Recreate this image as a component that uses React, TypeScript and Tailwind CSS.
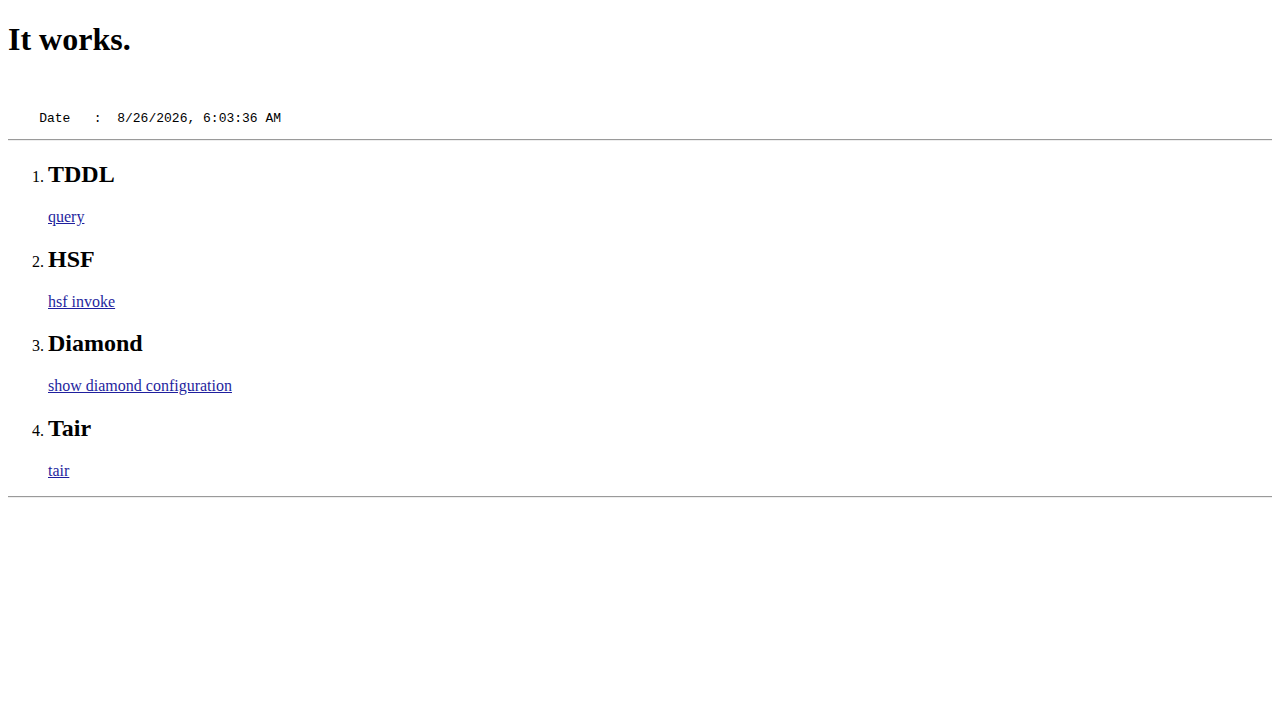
import React from "react";

const items = [
  { title: "TDDL", link: "query" },
  { title: "HSF", link: "hsf invoke" },
  { title: "Diamond", link: "show diamond configuration" },
  { title: "Tair", link: "tair" },
];

export default function App() {
  return (
    <div className="bg-white min-h-[720px] px-2 pt-[21.44px] font-['Liberation_Serif',serif] text-[16px] text-black">
      <h1 className="text-[32px] font-bold leading-[normal] mb-[21.44px]">It works.</h1>
      <pre className="font-['Liberation_Mono',monospace] text-[13px] leading-[normal] pt-[31px] whitespace-pre">
        {"    Date   :  8/26/2026, 6:03:36 AM"}
      </pre>
      <hr className="mt-[13px] h-0 border-t border-b border-t-[#9a9a9a] border-b-[#eeeeee] border-x-0" />
      <ol className="list-decimal pl-10 pt-[19.92px] pb-4">
        {items.map((it, i) => (
          <li key={it.title}>
            <h2 className="text-[24px] font-bold leading-[normal] mb-[19.92px]">{it.title}</h2>
            <p className={i === items.length - 1 ? "leading-[normal]" : "leading-[normal] mb-[19.92px]"}>
              <a href="#" className="text-[#1f1f9e] underline">
                {it.link}
              </a>
            </p>
          </li>
        ))}
      </ol>
      <hr className="h-0 border-t border-b border-t-[#9a9a9a] border-b-[#eeeeee] border-x-0" />
    </div>
  );
}
